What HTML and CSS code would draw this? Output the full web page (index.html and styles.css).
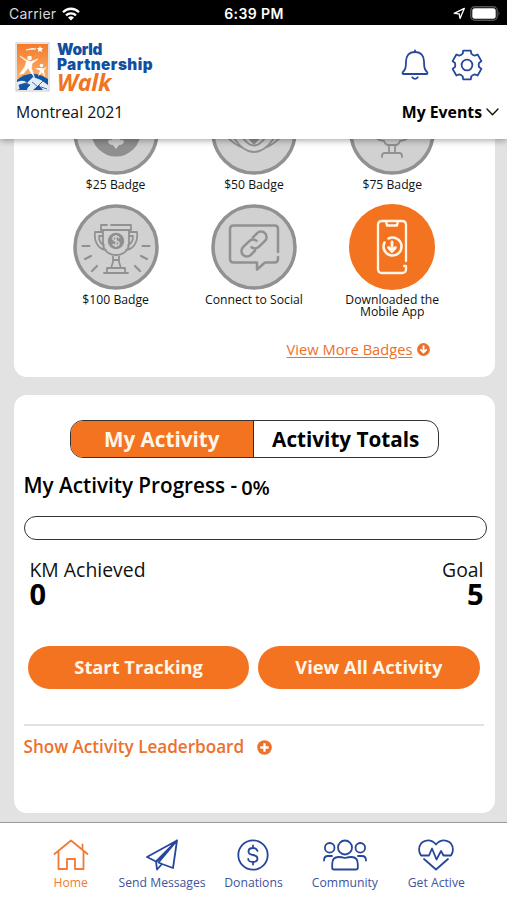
FILE: index.html
```html
<!DOCTYPE html>
<html lang="en">
<head>
<meta charset="utf-8">
<meta name="viewport" content="width=device-width, initial-scale=1">
<title>World Partnership Walk</title>
<link rel="stylesheet" href="styles.css">
</head>
<body>
<div class="app">
  <div class="status">
    <div class="status-left"><span class="carrier">Carrier</span>
      <svg width="18" height="14" viewBox="0 0 18 14" fill="none" stroke="#fff" stroke-width="2.3"><path d="M1 5.2C5.5.6 12.500.6 17 5.200M4 8.400c2.800-2.800 7.200-2.800 10 0"/><path d="M6 10.400Q9 8 12 10.400L9 13.600Z" fill="#fff" stroke="none"/></svg>
    </div>
    <span class="time">6:39 PM</span>
    <div class="status-right">
      <svg width="13" height="13" viewBox="0 0 13 13" fill="none" stroke="#fff" stroke-width="1.3" stroke-linejoin="round"><path d="M1.200 6.300 11.300 1.400 7 11.500 6.200 6.900Z"/></svg>
      <svg width="31" height="15" viewBox="0 0 31 15"><rect x=".8" y=".8" width="26.400" height="13.400" rx="4" fill="none" stroke="#555" stroke-width="1.4"/><rect x="2.300" y="2.300" width="23.400" height="10.400" rx="2.500" fill="#fff"/><path d="M28.500 5q2 2.500 0 5Z" fill="#555"/></svg>
    </div>
  </div>

  <header class="header">
    <div class="brand-row">
      <div class="brand">
        <svg class="brand-mark" width="35" height="50" viewBox="0 0 35 50">
          <defs><linearGradient id="sun" x2="0" y2="1"><stop offset="0" stop-color="#f47b2a"/><stop offset=".75" stop-color="#fbb06b"/></linearGradient></defs>
          <rect x="1" y="1" width="33" height="48" fill="#fff" stroke="#b9b9b9" stroke-width=".8"/>
          <rect x="2" y="2" width="31" height="46" fill="url(#sun)"/>
          <path d="M2 38Q16 26 33 37V48H2Z" fill="#1255a3"/>
          <path d="M2 40Q9 37 12 41l6-6 8 3 7 5v5h-5l-4-5-6 5h-6l1-4-5 2-6 2Z" fill="#e6edf5"/>
          <path d="M4 43l7-2 4 2-4 4H5ZM17 40l6 5M20 47l8-8M26 45l6 2" fill="#1255a3" stroke="#1255a3" stroke-width=".8"/>
          <circle cx="14.500" cy="16" r="2.300" fill="#fff"/>
          <path d="M5 14l7 4.500 4 1 7-2.500-6 4.500-.5 5 3 9-5-7-1-3-5 6-4 1 5-7 2-6Z" fill="#fff" stroke="#fff" stroke-width=".6" stroke-linejoin="round"/>
          <circle cx="26.500" cy="23.500" r="1.700" fill="#fff"/>
          <path d="M20 26.500l4-.5 5 .5 3-2-3 4 1 7-3-5-4 4 2-6Z" fill="#fff"/>
          <path d="M11 8q6-2.500 10-1-5 0-10 1Z" fill="#fff" stroke="#fff" stroke-width=".7"/><path d="m25 4 .9 2 2.400.2-1.800 1.600.6 2.300-2.100-1.200-2.100 1.200.6-2.300-1.800-1.600 2.400-.2Z" fill="#fff"/>
        </svg>
        <div class="brand-text"><span class="brand-line">World</span><span class="brand-line wide-line">Partnership</span><span class="brand-walk">Walk</span></div>
      </div>
      <div class="header-icons">
        <svg width="28" height="32" viewBox="0 0 28 32" fill="none" stroke="#27479c" stroke-width="1.8" stroke-linecap="round" stroke-linejoin="round"><path d="M14 3c-6 0-9 4-9 9.500 0 7-1 8.500-3.200 10.700-.8 1 0 1.800.8 1.800h22.800c.8 0 1.600-.8.8-1.800C24 21 23 19.500 23 12.500 23 7 20 3 14 3ZM14 3V1.500M11.300 28.300q2.700 3 5.400 0"/></svg>
        <svg width="32" height="32" viewBox="0 0 32 32" fill="none" stroke="#27479c" stroke-width="1.8" stroke-linejoin="round"><circle cx="16" cy="16" r="5.400"/><path d="M12.200 1.600H19.800L20.300 4.600Q22 6.200 23.700 6.600L26.600 5.500 30.400 12.100 28 14Q27.400 16 28 18L30.400 19.900 26.600 26.500 23.700 25.400Q22 25.800 20.300 27.400L19.800 30.400H12.200L11.700 27.400Q10 25.800 8.300 25.400L5.400 26.500 1.600 19.900 4 18Q4.600 16 4 14L1.600 12.100 5.400 5.500 8.300 6.600Q10 6.200 11.700 4.600Z"/></svg>
      </div>
    </div>
    <div class="event-row">
      <span class="event-name">Montreal 2021</span>
      <span class="event-picker">My Events<svg width="13" height="8" viewBox="0 0 13 8" fill="none" stroke="#111" stroke-width="1.4" stroke-linecap="round"><path d="m1 1 5.500 5.800L12 1"/></svg></span>
    </div>
  </header>

  <main class="content">
    <section class="card badges-card">
      <div class="badges">
        <div class="badge">
          <svg class="badge-art" viewBox="0 0 86 86"><circle cx="43" cy="43" r="41" class="disc"/><circle cx="43" cy="43" r="24.500" fill="#8f8f8f"/><path d="M39 44h8v7q4-1 4 2-1 3-5 3l-3 4-3-4q-4 0-5-3 0-3 4-2Z" fill="#d1d1d1"/></svg>
          <span class="badge-label">$25 Badge</span>
        </div>
        <div class="badge">
          <svg class="badge-art" viewBox="0 0 86 86"><circle cx="43" cy="43" r="41" class="disc"/><g class="line"><path d="M17 49q9 8 15 10 11 8 22 0 6-2 15-10M23 49q9 14 20 14t20-14M32 49q11 15 22 0"/></g><path d="M35 47h16l-8 9Z" fill="#8f8f8f"/></svg>
          <span class="badge-label">$50 Badge</span>
        </div>
        <div class="badge">
          <svg class="badge-art" viewBox="0 0 86 86"><circle cx="43" cy="43" r="41" class="disc"/><g class="line"><path d="M27 49q4 3 8 3 1 4 5 4v8M59 49q-4 3-8 3-1 4-5 4v8M38 56h10M33 68v-1q0-3 3-3h14q3 0 3 3v1"/></g></svg>
          <span class="badge-label">$75 Badge</span>
        </div>
        <div class="badge">
          <svg class="badge-art" viewBox="0 0 86 86"><circle cx="43" cy="43" r="41" class="disc"/>
            <g class="line"><path d="M34 21h-6v5h30v-5H38M30 26v13c0 7 5 12 13 12s13-5 13-12V26M30 28h-8c-1 8 2 17 11 18M56 28h8c1 8-2 17-11 18M30 32h-4c0 5 2 8 5 9M56 32h4c0 5-2 8-5 9M40 51v7l-2 6h10l-2-6v-7M40 56h6M34 64h18v5H34ZM31 69h24"/></g>
            <g class="rays"><path d="M9.500 42h7M69.500 42h7M12 55l6-3M74 55l-6-3M19 67l5-5M67 67l-5-5"/></g>
            <circle cx="43" cy="37" r="8.200" fill="#8f8f8f"/><path d="M46.200 34q-1-1.700-3.200-1.700-3 0-3 2.200 0 2 3 2.400t3 2.500q0 2.300-3 2.300-2.300 0-3.300-1.700M43 31v12" stroke="#d1d1d1" stroke-width="1.5" fill="none"/></svg>
          <span class="badge-label">$100 Badge</span>
        </div>
        <div class="badge">
          <svg class="badge-art" viewBox="0 0 86 86"><circle cx="43" cy="43" r="41" class="disc"/>
            <g class="line wide"><path d="M67 48V25q0-3.500-3.500-3.500h-41q-3.500 0-3.500 3.500v30q0 3.500 3.500 3.500H46v7l8-7h9.500q3.500 0 3.500-3.500v-2"/></g>
            <g class="line wide" transform="rotate(-45 43 40)"><path d="M39 45.500H33a5.500 5.500 0 0 1 0-11h8q5 0 6 5M47 34.500h6a5.500 5.500 0 0 1 0 11h-8q-5 0-6-5"/></g></svg>
          <span class="badge-label">Connect to Social</span>
        </div>
        <div class="badge">
          <svg class="badge-art" viewBox="0 0 86 86"><circle cx="43" cy="43" r="43" fill="#f47320"/>
            <g fill="none" stroke="#fff6ea" stroke-width="2.3" stroke-linecap="round" stroke-linejoin="round"><path d="M57 57V21q0-4-4-4H33q-4 0-4 4v44q0 4 4 4h20q4 0 4-4v-3h-2M37 17l1 4.500h10l1-4.500"/><path d="M35.500 38.500a9 9 0 1 0 4-4" stroke-width="2.6"/><path d="M43 38v9m-3.500-3.500 3.500 4 3.500-4" stroke-width="2.8"/></g></svg>
          <span class="badge-label">Downloaded the<br>Mobile App</span>
        </div>
      </div>
      <a class="more"><span class="more-text">View More Badges</span><svg width="13" height="13" viewBox="0 0 13 13"><circle cx="6.500" cy="6.500" r="6.400" fill="#ed702b"/><path d="M6.500 2.500v6.500M3.300 6.300l3.200 3.200 3.200-3.200" fill="none" stroke="#fff" stroke-width="1.9"/></svg></a>
    </section>

    <section class="card activity-card">
      <div class="tabs"><div class="tab active">My Activity</div><div class="tab">Activity Totals</div></div>
      <div class="progress-title"><span class="progress-name">My Activity Progress -</span><span class="percent">0%</span></div>
      <div class="progress"></div>
      <div class="stats">
        <div class="stat"><span class="stat-label">KM Achieved</span><span class="stat-value">0</span></div>
        <div class="stat right"><span class="stat-label">Goal</span><span class="stat-value">5</span></div>
      </div>
      <div class="actions"><div class="button">Start Tracking</div><div class="button">View All Activity</div></div>
      <div class="leader"><span class="leader-text">Show Activity Leaderboard</span><svg width="15" height="15" viewBox="0 0 15 15"><circle cx="7.500" cy="7.500" r="7.300" fill="#ed702b"/><path d="M7.500 3.300v8.400M3.300 7.500h8.400" stroke="#fff" stroke-width="2.3"/></svg></div>
    </section>
  </main>

  <nav class="nav">
    <div class="nav-item current"><svg width="36" height="32" viewBox="0 0 36 32"><path d="M1.500 15 18 1.500 34.500 15M5.500 12.500V30H14V20h8V30h8.500V12.500M29.500 10V5.500"/></svg><span>Home</span></div>
    <div class="nav-item"><svg width="34" height="32" viewBox="0 0 34 32"><path d="M32 1.500 2 18l9 4.500L32 1.500 28 29l-11-4-5 5.500-1-8M17 25l-3.500-1.500L32 1.500M11.500 22.500 20 14"/></svg><span>Send Messages</span></div>
    <div class="nav-item"><svg width="32" height="32" viewBox="0 0 32 32"><circle cx="16" cy="16" r="14.700"/><path d="M20.500 12q-1-3-4.500-3-4.500 0-4.500 3.400 0 2.800 4.500 3.600t4.500 3.600q0 3.400-4.500 3.400t-4.800-3M16 6.500V9M16 23v2.500"/></svg><span>Donations</span></div>
    <div class="nav-item"><svg width="44" height="32" viewBox="0 0 44 32"><circle cx="22" cy="8.500" r="7"/><circle cx="6.700" cy="8.800" r="4.800"/><circle cx="37.300" cy="8.800" r="4.800"/><path d="M11 30.500h22q1.800 0 1.800-1.800V25q0-7-6.300-7-3 0-6.500 1-3.500-1-6.500-1-6.300 0-6.300 7v3.700q0 1.800 1.800 1.800ZM1 21.500q0-4.500 4-4.500h4M43 21.500q0-4.500-4-4.500h-4"/></svg><span>Community</span></div>
    <div class="nav-item"><svg width="36" height="32" viewBox="0 0 36 32"><path d="M11 16.500H3Q1 13.500 1.100 10.500C1.300 1 12-1.500 18 5.500 24-1.500 34.700 1 34.900 10.500q.1 3-1.900 6h-7.500L23 12l-4.500 8.500L14 9.500ZM6 20l12 10.500L30 20"/></svg><span>Get Active</span></div>
  </nav>
</div>
</body>
</html>
```
FILE: styles.css
```css
* { box-sizing: border-box; }
body { margin: 0; font-family: "Open Sans", sans-serif; color: #111; }
svg { display: block; flex: none; }
.app { width: 507px; height: 900px; display: flex; flex-direction: column; overflow: hidden; background: #e2e2e2; }

.status { height: 25px; flex: none; padding: 2px 6px 0 9px; background: #000; color: #fff; display: grid; grid-template-columns: 1fr auto 1fr; align-items: center; font-family: Inter, sans-serif; font-size: 14px; }
.status-left, .status-right { display: flex; align-items: center; gap: 6px; }
.status-right { justify-content: flex-end; gap: 4px; }
.carrier { color: #d8d8d8; letter-spacing: .2px; }
.time { font-weight: 600; letter-spacing: .4px; margin-right: 2px; }

.header { height: 114px; flex: none; position: relative; background: #fff; box-shadow: 0 1px 7px rgba(0, 0, 0, .4); }
.brand-row { height: 72px; padding: 17px 24px 0 15px; display: flex; justify-content: space-between; }
.brand { display: flex; gap: 7px; }
.brand-text { display: flex; flex-direction: column; color: #124f9f; font-family: Inter, sans-serif; font-weight: 900; font-size: 15.300px; line-height: 15px; }
.brand-line { letter-spacing: -.3px; }
.wide-line { letter-spacing: .45px; }
.brand-walk { color: #ef7522; font-family: "Open Sans", sans-serif; font-style: italic; font-weight: 700; font-size: 23.500px; line-height: 20px; letter-spacing: -.3px; }
.header-icons { display: flex; gap: 22px; padding-top: 7px; }
.event-row { height: 30px; padding: 0 8px 0 16px; display: flex; align-items: center; justify-content: space-between; font-size: 15.800px; }
.event-picker { display: flex; align-items: center; gap: 4px; font-weight: 700; color: #000; }

.content { flex: 1; min-height: 0; overflow: hidden; padding: 0 12.500px 0 13.500px; display: flex; flex-direction: column; gap: 18px; }
.card { flex: none; background: #fff; border-radius: 13px; }
.badges-card { height: 298px; margin-top: -60px; padding: 10px 33px 0; }
.badges { display: grid; grid-template-columns: repeat(3, 138.300px); grid-auto-rows: 115px; }
.badge { display: flex; flex-direction: column; align-items: center; text-align: center; }
.badge-art { width: 86px; height: 86px; }
.badge-label { margin-top: 4px; font-size: 12.200px; line-height: 12px; white-space: nowrap; }
.disc { fill: #d1d1d1; stroke: #919191; stroke-width: 3.500; }
.line { fill: none; stroke: #919191; stroke-width: 1.800; stroke-linejoin: round; stroke-linecap: round; }
.wide { stroke-width: 2.500; }
.rays { stroke: #919191; stroke-width: 2.200; stroke-linecap: round; }
.more { display: flex; align-items: center; justify-content: flex-end; gap: 4px; height: 20px; margin: 20px 32px 0 0; color: #ed702b; font-size: 14.700px; }
.more-text { text-decoration: underline; text-underline-offset: 2px; }

.activity-card { height: 418px; padding: 25px 8px 0 10px; }
.tabs { display: grid; grid-template-columns: 1fr 1fr; width: 369px; height: 38px; margin-left: 46px; border: 1.500px solid #333; border-radius: 13px; overflow: hidden; font-size: 20.700px; font-weight: 700; color: #000; }
.tab { display: flex; align-items: center; justify-content: center; }
.tab.active { background: #f47320; color: #fff6ea; border-right: 1px solid #532000; }
.progress-title { display: flex; align-items: center; gap: 4px; height: 28px; margin-top: 13px; font-size: 20.700px; font-weight: 600; color: #000; white-space: nowrap; }
.percent { padding-top: 5px; font-size: 20px; }
.progress { height: 24px; margin-top: 17px; border: 1.500px solid #333; border-radius: 12px; }
.stats { display: flex; justify-content: space-between; padding: 0 3px 0 6px; margin-top: 17px; }
.stat { display: flex; flex-direction: column; }
.right { text-align: right; }
.stat-label { font-size: 19.400px; line-height: 25px; }
.stat-value { font-size: 29px; line-height: 24px; font-weight: 700; color: #000; }
.actions { display: grid; grid-template-columns: 1fr 1fr; gap: 9px; margin: 40px 7px 0 4.500px; }
.button { height: 43px; padding-bottom: 2px; border-radius: 22px; background: #f47320; color: #fff6ea; display: flex; align-items: center; justify-content: center; font-size: 18.300px; font-weight: 700; }
.leader { display: flex; align-items: center; gap: 13px; margin: 35px 3px 0 0; padding-top: 9px; border-top: 2px solid #e2e2e2; color: #ed702b; font-size: 17.100px; line-height: 24px; font-weight: 600; }

.nav { height: 78px; flex: none; padding: 16px 25px 0; background: #fff; border-top: 1px solid #999; display: grid; grid-template-columns: repeat(5, 1fr); }
.nav-item { display: flex; flex-direction: column; align-items: center; gap: 3px; color: #41539e; font-size: 12.200px; line-height: 18px; white-space: nowrap; }
.nav-item svg { fill: none; stroke: #27479c; stroke-width: 1.800; stroke-linejoin: round; stroke-linecap: round; }
.current { color: #f17a35; }
.nav-item.current svg { stroke: #f17a35; }
```
